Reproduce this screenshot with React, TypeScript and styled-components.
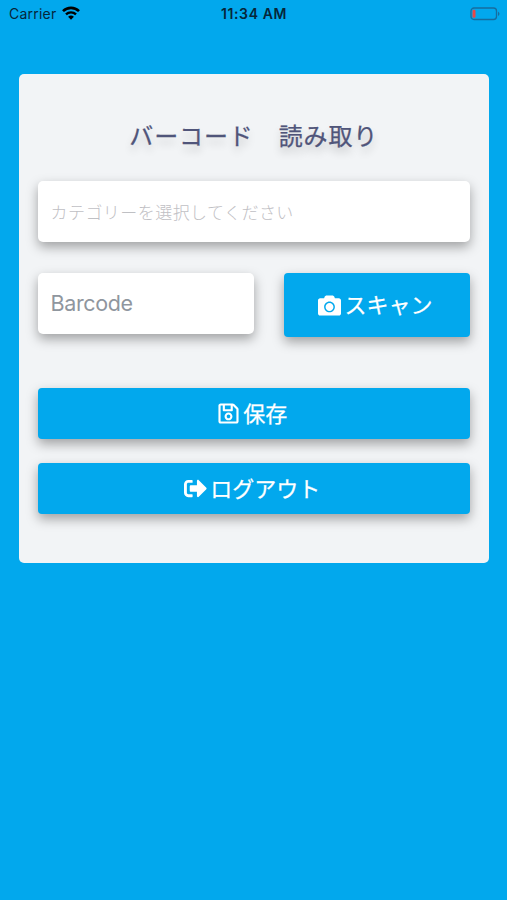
import React from "react";
import styled, { createGlobalStyle } from "styled-components";
import { FaCamera, FaRegSave, FaSignOutAlt } from "react-icons/fa";

const BLUE = "#02a8ed";

const GlobalStyle = createGlobalStyle`
  * { box-sizing: border-box; }
  body {
    margin: 0;
    background: ${BLUE};
    font-family: Inter, "Noto Sans CJK JP", sans-serif;
  }
`;

const Screen = styled.main`
  display: flex;
  flex-direction: column;
  width: 507px;
  height: 900px;
  overflow: hidden;
  background: ${BLUE};
`;

const StatusBar = styled.header`
  display: grid;
  grid-template-columns: 1fr auto 1fr;
  align-items: center;
  height: 27px;
  padding: 0 6px 0 9px;
  font-size: 14px;
  line-height: 27px;
  color: #06263a;
`;

const Carrier = styled.div`
  display: flex;
  align-items: center;
  gap: 6px;
  letter-spacing: 0.22px;

  svg {
    margin-top: -2px;
  }
`;

const Clock = styled.time`
  margin-right: 2px;
  font-size: 14px;
  font-weight: 600;
  letter-spacing: 0.62px;
`;

const Battery = styled.svg`
  justify-self: end;
`;

const Card = styled.section`
  display: flex;
  flex-direction: column;
  width: 470px;
  height: 489px;
  margin: 47px 0 0 19px;
  padding: 45px 19px 0 18.5px;
  border-radius: 5px;
  background: #f2f4f6;
`;

const Title = styled.h1`
  margin: 1px 0 27px;
  height: 34px;
  font-size: 24px;
  font-weight: 400;
  line-height: 34px;
  letter-spacing: 0.9px;
  text-align: center;
  color: #50557a;
  -webkit-text-stroke: 0.25px #50557a;
  text-shadow: 0 6px 9px rgba(0, 0, 0, 0.2);
`;

const shadow = "0 5px 12px rgba(0, 0, 0, 0.34)";

const Field = styled.div<{ $small?: boolean }>`
  display: flex;
  align-items: center;
  height: 61px;
  padding: 0 13px 1px;
  border-radius: 5px;
  background: #fff;
  box-shadow: ${shadow};
  white-space: nowrap;
  font-size: ${(p) => (p.$small ? "17px" : "21.5px")};
  font-weight: ${(p) => (p.$small ? 300 : 400)};
  letter-spacing: ${(p) => (p.$small ? "0.45px" : "-0.35px")};
  color: ${(p) => (p.$small ? "#bfc0c4" : "#8f969e")};
`;

const ScanRow = styled.div`
  display: grid;
  grid-template-columns: 216px 186px;
  justify-content: space-between;
  align-items: start;
  margin: 31px 0 51px;
`;

const Button = styled.button<{ $tall?: boolean }>`
  display: flex;
  align-items: center;
  justify-content: center;
  gap: 3px;
  width: 100%;
  height: ${(p) => (p.$tall ? 64 : 51)}px;
  padding: 0 3px 0 0;
  border: 0;
  border-radius: 4px;
  background: ${BLUE};
  box-shadow: ${shadow};
  color: #fff;
  font-family: inherit;
  font-size: 22px;
  font-weight: 400;
  line-height: 30px;
  -webkit-text-stroke: 0.25px #fff;
`;

const Actions = styled.div`
  display: flex;
  flex-direction: column;
  gap: 24px;
`;

export default function App() {
  return (
    <>
      <GlobalStyle />
      <Screen>
        <StatusBar>
          <Carrier>
            <span>Carrier</span>
            <svg width="18" height="14" viewBox="0 0 18 14" fill="none" stroke="#000">
              <path d="M1 5.2C5.5 0.7 12.5 0.7 17 5.2" strokeWidth="2.6" />
              <path d="M4 8.4C6.8 5.7 11.2 5.7 14 8.4" strokeWidth="2.4" />
              <path d="M9 13.7L6.1 10.7Q9 8.4 11.9 10.7Z" fill="#000" stroke="none" />
            </svg>
          </Carrier>
          <Clock>11:34 AM</Clock>
          <Battery width="31" height="14" viewBox="0 0 31 14">
            <rect x="1" y="1" width="25.5" height="11.5" rx="3" fill="none" stroke="#176c9e" strokeWidth="1.3" />
            <rect x="2.5" y="2.8" width="3" height="8" rx="1.2" fill="#e94747" />
            <path d="M28 4.5Q31 6.8 28 9.1Z" fill="#176c9e" />
          </Battery>
        </StatusBar>
        <Card>
          <Title>バーコード　読み取り</Title>
          <Field $small>カテゴリーを選択してください</Field>
          <ScanRow>
            <Field>Barcode</Field>
            <Button $tall>
              <FaCamera size={23} />
              スキャン
            </Button>
          </ScanRow>
          <Actions>
            <Button>
              <FaRegSave size={23} />
              保存
            </Button>
            <Button>
              <FaSignOutAlt size={23} />
              ログアウト
            </Button>
          </Actions>
        </Card>
      </Screen>
    </>
  );
}
